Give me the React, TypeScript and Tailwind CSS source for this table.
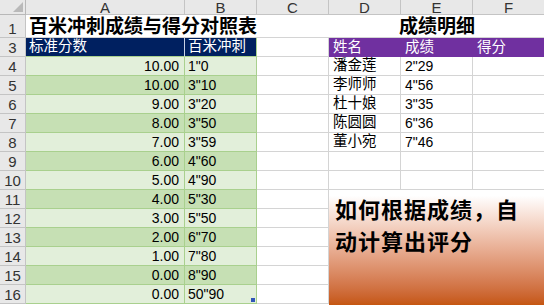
import React from "react";

const columns = ["A", "B", "C", "D", "E", "F"];

const scoreTable = [
  ["10.00", '1"0'],
  ["10.00", '3"10'],
  ["9.00", '3"20'],
  ["8.00", '3"50'],
  ["7.00", '3"59'],
  ["6.00", '4"60'],
  ["5.00", '4"90'],
  ["4.00", '5"30'],
  ["3.00", '5"50'],
  ["2.00", '6"70'],
  ["1.00", '7"80'],
  ["0.00", '8"90'],
  ["0.00", '50"90'],
];

const results = [
  ["潘金莲", '2"29'],
  ["李师师", '4"56'],
  ["杜十娘", '3"35'],
  ["陈圆圆", '6"36'],
  ["董小宛", '7"46'],
];

const font = "font-['Liberation_Sans','Noto_Sans_CJK_SC',sans-serif]";

function RowHead({ n }: { n: number }) {
  return (
    <div className="flex items-end justify-center border-r border-b border-[#c4c4c4] bg-[#e8e8e8] pb-[1px] text-[15px] leading-none text-[#333]">
      {n}
    </div>
  );
}

export default function App() {
  return (
    <div
      className={`relative h-[305px] w-[544px] overflow-hidden bg-white ${font}`}
    >
      <div className="grid grid-cols-[26px_159px_72px_72px_72px_72px_72px] grid-rows-[15px_23px_repeat(14,19px)]">
        {/* column headers */}
        <div className="relative border-r border-b border-[#b8b8b8] bg-[#e8e8e8]">
          <div className="absolute right-[2px] bottom-[2px] h-0 w-0 border-b-[10px] border-l-[10px] border-b-[#b9b9b9] border-l-transparent" />
        </div>
        {columns.map((c) => (
          <div
            key={c}
            className="flex items-center justify-center border-r border-b border-[#c4c4c4] bg-[#e8e8e8] text-[15px] leading-none text-[#333]"
          >
            {c}
          </div>
        ))}

        {/* row 1 */}
        <RowHead n={1} />
        <div className="col-span-2 flex items-end border-b border-[#d4d4d4] pb-[1px] pl-[3px] text-[19px] leading-none font-bold text-black">
          百米冲刺成绩与得分对照表
        </div>
        <div className="border-b border-[#d4d4d4]" />
        <div className="col-span-3 flex items-end justify-center border-b border-[#d4d4d4] pb-[1px] text-[19px] leading-none font-bold text-black">
          成绩明细
        </div>

        {/* row 3 */}
        <RowHead n={3} />
        <div className="flex items-center border-r border-b border-r-[#c9d2e6] border-b-[#a9d08e] bg-[#002060] pl-[3px] text-[14.5px] text-white">
          标准分数
        </div>
        <div className="flex items-center border-r border-b border-r-[#a9d08e] border-b-[#a9d08e] bg-[#002060] pl-[3px] text-[14.5px] text-white">
          百米冲刺
        </div>
        <div className="border-r border-b border-[#d4d4d4]" />
        <div className="flex items-center bg-[#7030a0] pl-[4px] text-[14.5px] text-white">
          姓名
        </div>
        <div className="flex items-center bg-[#7030a0] pl-[4px] text-[14.5px] text-white">
          成绩
        </div>
        <div className="flex items-center bg-[#7030a0] pl-[4px] text-[14.5px] text-white">
          得分
        </div>

        {/* data rows */}
        {scoreTable.map(([score, time], i) => {
          const fill = i % 2 === 0 ? "bg-[#e2efda]" : "bg-[#c6e0b4]";
          const person = results[i];
          return (
            <React.Fragment key={i}>
              <RowHead n={i + 4} />
              <div
                className={`flex items-center justify-end border-r border-b border-[#a9d08e] pr-[5px] text-[14px] text-black ${fill}`}
              >
                {score}
              </div>
              <div
                className={`relative flex items-center border-r border-b border-[#a9d08e] pl-[3px] text-[14px] text-black ${fill}`}
              >
                {time}
                {i === scoreTable.length - 1 && (
                  <div className="absolute right-[1px] bottom-[1px] h-[4px] w-[4px] bg-[#3056b8]" />
                )}
              </div>
              <div className="border-r border-b border-[#d4d4d4]" />
              <div className="flex items-center border-r border-b border-[#d4d4d4] pl-[4px] text-[14.5px] text-black">
                {person ? person[0] : ""}
              </div>
              <div className="flex items-center border-r border-b border-[#d4d4d4] pl-[4px] text-[14px] text-black">
                {person ? person[1] : ""}
              </div>
              <div className="border-r border-b border-[#d4d4d4]" />
            </React.Fragment>
          );
        })}
      </div>

      {/* floating text box */}
      <div className="absolute top-[190px] left-[329px] h-[115px] w-[216px] bg-gradient-to-b from-white from-5% to-[#c5560f] pt-[5px] pl-[6px]">
        <p className="text-[22px] leading-[32px] font-bold tracking-[1px] text-black">
          如何根据成绩，自
          <br />
          动计算出评分
        </p>
      </div>
    </div>
  );
}
